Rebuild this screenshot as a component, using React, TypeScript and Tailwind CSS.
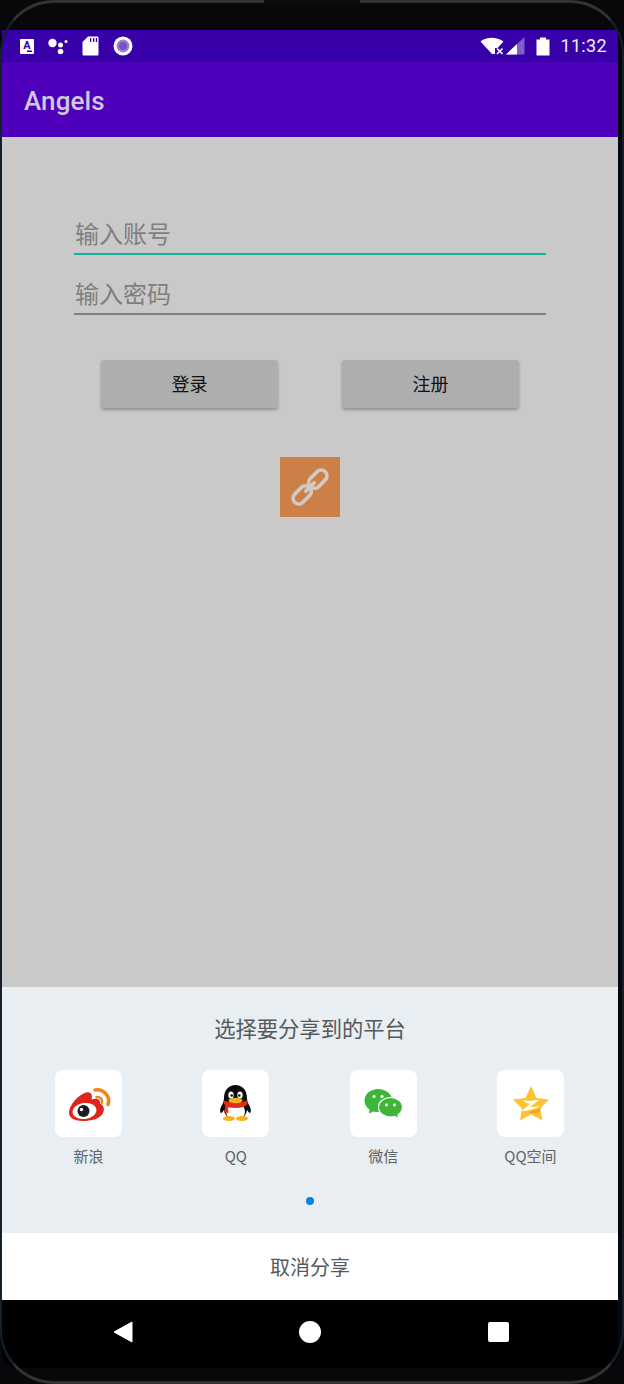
import React from "react";

const cjk = "font-['Noto_Sans_CJK_SC','Noto_Sans',sans-serif]";

function Weibo() {
  return (
    <svg width="67" height="67" viewBox="0 0 67 67">
      <path d="M14 43C14 35 23 25 31 22.500C36 21 38 25 36.500 29.500C41 27.500 46 29 45 33.500C49 35 50 40 47.500 44C44 49 36 51 28 51C20 51 14 48 14 43Z" fill="#e0241b" />
      <ellipse cx="29.500" cy="41" rx="12" ry="8" fill="#fff" transform="rotate(-8 29.500 41)" />
      <circle cx="28.500" cy="41" r="6" fill="#1d1d1d" />
      <circle cx="26.500" cy="39.500" r="1.700" fill="#fff" />
      <path d="M40 20C48 18.500 56 26 53 34.500" stroke="#f0851c" strokeWidth="3.500" fill="none" strokeLinecap="round" />
      <path d="M41.500 27C45 26.500 48 29.500 47 33" stroke="#f0851c" strokeWidth="2.600" fill="none" strokeLinecap="round" />
    </svg>
  );
}

function Penguin() {
  return (
    <svg width="67" height="67" viewBox="0 0 67 67">
      <path d="M22 28C22 20 27 15 33.500 15C40 15 45 20 45 28C45 31 46 33 47 35C49 38 49.500 42 48 43C47 43 46 41 45 40C44 46 40 50 33.500 50C27 50 23 46 22 40C21 41 20 43 19 43C17.500 42 18 38 20 35C21 33 22 31 22 28Z" fill="#0c0c0c" />
      <ellipse cx="33.500" cy="41.500" rx="9.500" ry="9" fill="#fff" />
      <path d="M21.500 30.500C27 33 40 33 45 30.500L45.500 34.500C42 37 38 38 35 38L26 37.500L26.500 43L22 42.500L23.500 36C22.500 35 21.500 33 21.500 30.500Z" fill="#e32b1c" />
      <ellipse cx="29" cy="25" rx="2.700" ry="3.600" fill="#fff" />
      <ellipse cx="38" cy="25" rx="2.700" ry="3.600" fill="#fff" />
      <circle cx="29.700" cy="25.500" r="1.300" fill="#111" />
      <circle cx="37.300" cy="25.500" r="1.300" fill="#111" />
      <ellipse cx="33.500" cy="30.500" rx="7" ry="2.800" fill="#f6b21d" />
      <ellipse cx="27" cy="48.500" rx="6" ry="2.500" fill="#f6b21d" />
      <ellipse cx="40" cy="48.500" rx="6" ry="2.500" fill="#f6b21d" />
    </svg>
  );
}

function WeChat() {
  return (
    <svg width="67" height="67" viewBox="0 0 67 67">
      <path d="M28 19C36 19 42 24 42.500 30.500C42.500 37 36 42 28 42C26.500 42 25 41.800 23.500 41.400L19 43.500L19.500 39.500C16 37.500 14.500 34 14.500 30.500C14.500 24 20.500 19 28 19Z" fill="#3fb638" />
      <path d="M40.500 27.500C47 27.500 52.500 31.500 52.500 37C52.500 40.500 50.500 43 48 45L48.500 48.500L44.500 46.500C43 46.800 42 47 40.500 47C34 47 28.500 43 28.500 37.200C28.500 31.500 34 27.500 40.500 27.500Z" fill="#3fb638" stroke="#fff" strokeWidth="1.200" />
      <circle cx="24" cy="26.500" r="1.600" fill="#fff" />
      <circle cx="32" cy="26.500" r="1.600" fill="#fff" />
      <circle cx="36.500" cy="35" r="1.400" fill="#fff" />
      <circle cx="44.500" cy="35" r="1.400" fill="#fff" />
    </svg>
  );
}

function Qzone() {
  return (
    <svg width="67" height="67" viewBox="0 0 67 67">
      <path d="M34 16L39.500 28L52 29.500L43 38.500L45.500 50.500L34 44.500L23 50.500L25 38.500L16 29.500L28.500 28Z" fill="#fcc432" />
      <path d="M30 42C36 41 41 39.500 46 37L43 39.500L43.500 42C39 43.500 34 44 30 42Z" fill="#eea52a" />
      <path d="M26 30C30 31.500 37 31 42.500 29.500L33 37C36 37 40 36.500 44 35.500C38 39 31 41 24.500 41L33.500 33.500C30.500 33.500 28 33 26 30Z" fill="#fff" />
    </svg>
  );
}

function ShareItem({ label, children }: { label: string; children: React.ReactNode }) {
  return (
    <div className="flex w-[67px] flex-col items-center">
      <div className="h-[67px] w-[67px] rounded-lg bg-white">{children}</div>
      <div className={`mt-[8px] whitespace-nowrap text-center text-[15px] leading-[22px] text-[#5f6367] ${cjk}`}>{label}</div>
    </div>
  );
}

function Field({ label, line }: { label: string; line: string }) {
  return (
    <div className={`h-[38px] border-b-2 pl-px ${line} ${cjk} text-[24px] leading-[32px] text-[#7f7f7f]`}>{label}</div>
  );
}

export default function App() {
  return (
    <div className="relative h-[1384px] w-[624px] overflow-hidden bg-[#08080b] font-['Roboto',sans-serif]">
      <div className="pl-[2px] pt-[30px]">
        <div className="flex w-[616px] flex-col">
          <div className="flex h-[32px] items-center justify-between bg-[#3700a8] pl-[17px] pr-[11px]">
            <div className="flex items-center">
              <svg width="16" height="17" viewBox="0 0 16 17" className="mr-[13px]">
                <rect x="1" y="1" width="14" height="15" rx="1" fill="#fff" />
                <text x="8" y="11" textAnchor="middle" fontSize="11" fontWeight="700" fill="#3700a8" fontFamily="Roboto">A</text>
                <rect x="8" y="12.500" width="5" height="1.500" fill="#3700a8" />
              </svg>
              <svg width="21" height="18" viewBox="0 0 21 18" className="mr-[13px]">
                <circle cx="4.500" cy="6" r="4.200" fill="#fff" />
                <circle cx="12.500" cy="8" r="2.500" fill="#fff" />
                <circle cx="12.500" cy="14.500" r="2.800" fill="#fff" />
                <circle cx="18" cy="4.500" r="1.500" fill="#fff" />
              </svg>
              <svg width="17" height="20" viewBox="0 0 17 20" className="mr-[14px]">
                <path d="M6 0.500H15C16 0.500 16.500 1 16.500 2V18C16.500 19 16 19.500 15 19.500H2C1 19.500 0.500 19 0.500 18V6Z" fill="#fff" />
                <path d="M8 2h1.300v4H8zM11 2h1.300v4H11zM13.800 2h1.300v4h-1.300z" fill="#3700a8" />
              </svg>
              <svg width="20" height="20" viewBox="0 0 20 20">
                <circle cx="10" cy="10" r="9.500" fill="#fff" />
                <circle cx="10" cy="10" r="6.500" fill="#9c82d6" />
                <circle cx="10" cy="10" r="4" fill="#7453c4" />
              </svg>
            </div>
            <div className="flex items-center">
              <svg width="24" height="18" viewBox="0 0 24 18" className="mr-[2px]">
                <path d="M0.500 4.500C6.500 -0.500 16.500 -0.500 23.500 4.500L17.500 11L15 11V17H12L0.500 4.500Z" fill="#fff" />
                <path d="M17 11.500l5.500 5.500M22.500 11.500l-5.500 5.500" stroke="#fff" strokeWidth="1.600" />
              </svg>
              <svg width="19" height="18" viewBox="0 0 19 18" className="mr-[11px]">
                <path d="M0 17.500L18.500 0V17.500Z" fill="#7f5fd0" />
                <path d="M0 17.500L11 7V17.500Z" fill="#fff" />
              </svg>
              <svg width="14" height="19" viewBox="0 0 14 19" className="mr-[10px]">
                <path d="M4 0.500H10V2.500H13.500V18.500H0.500V2.500H4Z" fill="#fff" />
              </svg>
              <span className="text-[18px] leading-[24px] tracking-[0.35px] text-[#f1eef8]">11:32</span>
            </div>
          </div>

          <div className="flex h-[75px] items-center bg-[#4e00bb] pl-[22px] pt-[2px] text-[26px] font-medium leading-[32px] tracking-[0.1px] text-[#cfc9dc] shadow-[0_2px_4px_rgba(0,0,0,0.2)]">
            Angels
          </div>

          <div className="flex h-[850px] flex-col items-center bg-[#c9c9c9] pt-[80px]">
            <div className="flex w-[472px] flex-col gap-[22px]">
              <Field label="输入账号" line="border-[#14b0a0]" />
              <Field label="输入密码" line="border-[#7f7f7f]" />
            </div>
            <div className="mt-[45px] flex w-[418px] justify-between">
              <div className={`flex h-[48px] w-[177px] items-center justify-center rounded-[3px] bg-[#adaeae] pb-[2px] text-[18px] text-[#111] shadow-[0_2px_3px_rgba(0,0,0,0.28)] ${cjk}`}>登录</div>
              <div className={`flex h-[48px] w-[177px] items-center justify-center rounded-[3px] bg-[#adaeae] pb-[2px] text-[18px] text-[#111] shadow-[0_2px_3px_rgba(0,0,0,0.28)] ${cjk}`}>注册</div>
            </div>
            <div className="mt-[49px] flex h-[60px] w-[60px] items-center justify-center bg-[#cc8048]">
              <svg width="46" height="46" viewBox="0 0 44 44" fill="none" stroke="#d2c9c0" strokeWidth="3.600">
                <rect x="24" y="4.500" width="11" height="20" rx="5.500" transform="rotate(45 29.500 14.500)" />
                <rect x="9" y="19.500" width="11" height="20" rx="5.500" transform="rotate(45 14.500 29.500)" />
                <path d="M18 26L26 18" strokeLinecap="round" />
              </svg>
            </div>
          </div>

          <div className="flex h-[246px] flex-col items-center bg-[#e9eef2] pt-[26px]">
            <div className={`text-[21.3px] leading-[30px] text-[#55595c] ${cjk}`}>选择要分享到的平台</div>
            <div className="mt-[27px] flex w-full justify-between pl-[53px] pr-[54px]">
              <ShareItem label="新浪"><Weibo /></ShareItem>
              <ShareItem label="QQ"><Penguin /></ShareItem>
              <ShareItem label="微信"><WeChat /></ShareItem>
              <ShareItem label="QQ空间"><Qzone /></ShareItem>
            </div>
            <div className="mt-[30px] h-[8px] w-[8px] rounded-full bg-[#0a84d8]" />
          </div>

          <div className={`flex h-[67px] items-center justify-center bg-white text-[20px] text-[#55595c] ${cjk}`}>取消分享</div>

          <div className="flex h-[68px] items-start justify-between rounded-b-[14px] bg-black pl-[111px] pr-[109px] pt-[21px]">
            <svg width="20" height="22" viewBox="0 0 20 22"><path d="M19 1V21L1 11Z" fill="#fff" stroke="#fff" strokeLinejoin="round" /></svg>
            <div className="mr-[2px] h-[22px] w-[22px] rounded-full bg-white" />
            <div className="mt-px h-[20px] w-[21px] rounded-[2px] bg-white" />
          </div>
        </div>
      </div>

      <div className="pointer-events-none absolute inset-0 rounded-[54px] border-x-2 border-y-[3px] border-x-[#14202b] border-y-[#333335]" />
      <div className="pointer-events-none absolute left-1/2 top-0 h-[3px] w-[96px] -translate-x-1/2 bg-[#0c0c0e]" />
    </div>
  );
}
